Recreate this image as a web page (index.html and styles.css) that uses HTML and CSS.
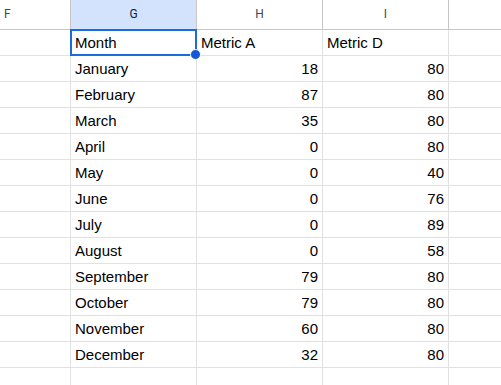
FILE: index.html
```html
<!DOCTYPE html>
<html>
<head>
<meta charset="utf-8">
<link rel="stylesheet" href="styles.css">
</head>
<body>
<div class="sheet">
  <div class="hdr hdr-f">F</div>
  <div class="hdr hdr-sel">G</div>
  <div class="hdr">H</div>
  <div class="hdr">I</div>
  <div class="hdr hdr-last"></div>

  <div class="c"></div><div class="c sel-cell">Month<span class="sel"><span class="handle"></span></span></div><div class="c">Metric A</div><div class="c">Metric D</div><div class="c last"></div>
  <div class="c"></div><div class="c">January</div><div class="c n">18</div><div class="c n">80</div><div class="c last"></div>
  <div class="c"></div><div class="c">February</div><div class="c n">87</div><div class="c n">80</div><div class="c last"></div>
  <div class="c"></div><div class="c">March</div><div class="c n">35</div><div class="c n">80</div><div class="c last"></div>
  <div class="c"></div><div class="c">April</div><div class="c n">0</div><div class="c n">80</div><div class="c last"></div>
  <div class="c"></div><div class="c">May</div><div class="c n">0</div><div class="c n">40</div><div class="c last"></div>
  <div class="c"></div><div class="c">June</div><div class="c n">0</div><div class="c n">76</div><div class="c last"></div>
  <div class="c"></div><div class="c">July</div><div class="c n">0</div><div class="c n">89</div><div class="c last"></div>
  <div class="c"></div><div class="c">August</div><div class="c n">0</div><div class="c n">58</div><div class="c last"></div>
  <div class="c"></div><div class="c">September</div><div class="c n">79</div><div class="c n">80</div><div class="c last"></div>
  <div class="c"></div><div class="c">October</div><div class="c n">79</div><div class="c n">80</div><div class="c last"></div>
  <div class="c"></div><div class="c">November</div><div class="c n">60</div><div class="c n">80</div><div class="c last"></div>
  <div class="c"></div><div class="c">December</div><div class="c n">32</div><div class="c n">80</div><div class="c last"></div>
  <div class="c"></div><div class="c"></div><div class="c"></div><div class="c"></div><div class="c last"></div>
</div>
</body>
</html>
```
FILE: styles.css
```css
html, body {
  margin: 0;
  padding: 0;
  background: #ffffff;
  overflow: hidden;
}
.sheet {
  display: grid;
  grid-template-columns: 71px 126px 126px 126px 60px;
  grid-template-rows: 30px repeat(14, 26px);
  font-family: "Liberation Sans", Arial, sans-serif;
  font-size: 15px;
  color: #000;
}
.hdr {
  box-sizing: border-box;
  border-right: 1px solid #c4c7c5;
  border-bottom: 1px solid #c4c7c5;
  background: #ffffff;
  color: #444746;
  font-family: Roboto, "Liberation Sans", sans-serif;
  font-size: 12px;
  display: flex;
  align-items: center;
  justify-content: center;
  padding-bottom: 1px;
}
.hdr-f {
  justify-content: flex-start;
  padding-left: 4px;
}
.hdr-sel {
  background: #d3e3fd;
  color: #0b1c3c;
}
.hdr-last {
  border-right: none;
}
.c {
  box-sizing: border-box;
  border-right: 1px solid #e1e1e1;
  border-bottom: 1px solid #e1e1e1;
  display: flex;
  align-items: center;
  padding: 0 4px 1px 4px;
  white-space: nowrap;
  position: relative;
}
.c.n {
  justify-content: flex-end;
}
.c.last {
  border-right: none;
}
.sel-cell {
  z-index: 2;
}
.sel {
  position: absolute;
  left: -1px;
  top: -1px;
  width: 127px;
  height: 27px;
  box-sizing: border-box;
  border: 2px solid #1a6ae0;
}
.handle {
  position: absolute;
  right: -6px;
  bottom: -6px;
  width: 9px;
  height: 9px;
  border-radius: 50%;
  background: #1558d6;
  border: 1px solid #ffffff;
  box-sizing: content-box;
}
```
